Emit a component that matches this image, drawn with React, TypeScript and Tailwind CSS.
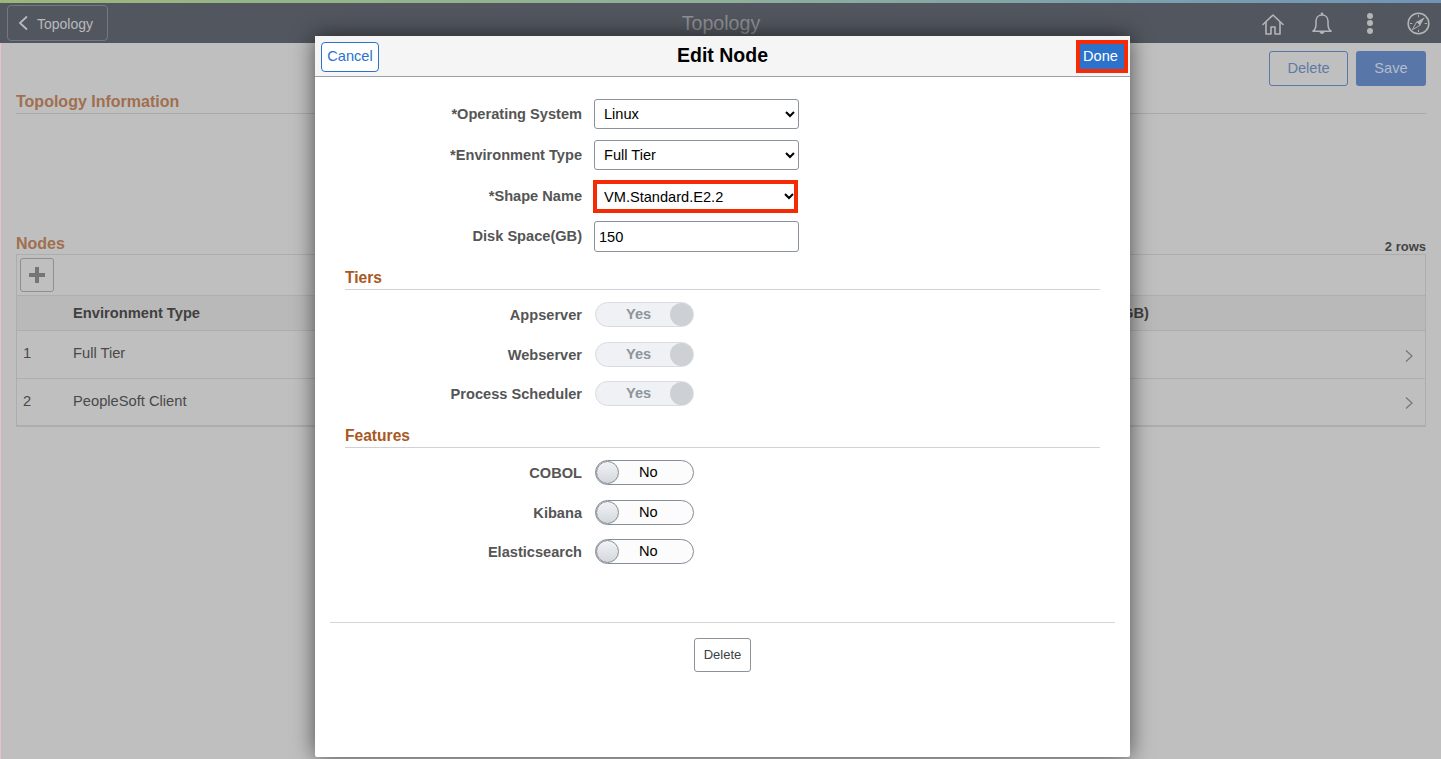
const FONT = "[font-family:'Liberation_Sans',Arial,sans-serif]"

const LABEL = 'text-right text-[14.6px] font-bold text-[#555555] leading-none'
const CONTROL = 'bg-white text-[14.6px] text-black'

function HomeIcon() {
  return (
    <svg width="22" height="21" viewBox="0 0 22 21" fill="none" stroke="#b4b5b7" strokeWidth="1.600" strokeLinejoin="round" strokeLinecap="round">
      <path d="M1 10.500 11 1l10 9.500" />
      <path d="M4 8.500V20h5v-7h4v7h5V8.500" />
    </svg>
  )
}

function BellIcon() {
  return (
    <svg width="20" height="23" viewBox="0 0 20 23" fill="none" stroke="#b4b5b7" strokeWidth="1.500" strokeLinejoin="round">
      <path d="M1 19.200c2.200-1.700 3-4 3-7V9C4 5.500 6.500 3 10 3s6 2.500 6 6v3.200c0 3 .8 5.300 3 7z" />
      <circle cx="10" cy="1.800" r="1.300" fill="#b4b5b7" stroke="none" />
      <path d="M7.500 19.500c0 3.200 5 3.200 5 0z" fill="#b4b5b7" stroke="none" />
    </svg>
  )
}

function DotsIcon() {
  return (
    <div className="flex flex-col gap-[1.500px]">
      <span className="w-[6px] h-[6px] rounded-full bg-[#b4b5b7]" />
      <span className="w-[6px] h-[6px] rounded-full bg-[#b4b5b7]" />
      <span className="w-[6px] h-[6px] rounded-full bg-[#b4b5b7]" />
    </div>
  )
}

function CompassIcon() {
  return (
    <svg width="23" height="23" viewBox="0 0 24 24" fill="none" stroke="#b4b5b7" strokeWidth="1.600">
      <circle cx="12" cy="12" r="10.800" />
      <path d="M18.500 5.500 13.800 13.800 10.200 10.200z" fill="#b4b5b7" stroke="none" />
      <path d="M5.500 18.500l4.700-8.300 3.600 3.600z" strokeWidth="1" />
      <path d="M12 3v2.500M12 18.500V21M3 12h2.500M18.500 12H21" strokeWidth="1" />
    </svg>
  )
}

function Chevron() {
  return (
    <svg width="10" height="14" viewBox="0 0 10 14" fill="none" stroke="#767676" strokeWidth="1.200">
      <path d="M2 1.500 8 7l-6 5.500" />
    </svg>
  )
}

function SelectRow({ label, value }: { label: string; value: string }) {
  return (
    <div className="grid grid-cols-[267px_205px] gap-x-3 items-center h-[30px]">
      <div className={LABEL}>{label}</div>
      <select defaultValue={value} className={`${CONTROL} w-[205px] h-[30px] pl-[5px] border border-[#8c9299] rounded-[3px] outline-none`}>
        <option>{value}</option>
      </select>
    </div>
  )
}

function Toggle({ label, on }: { label: string; on: boolean }) {
  return (
    <div className="grid grid-cols-[267px_100px] gap-x-3 items-center h-[25px]">
      <div className={LABEL}>{label}</div>
      {on ? (
        <div className="relative ml-px -translate-y-px h-[25px] w-[99px] rounded-full bg-[#eff1f4] border border-[#d8dce0]">
          <span className="absolute left-[30px] top-[3px] text-[14.600px] font-bold text-[#8d949c] leading-[16px]">Yes</span>
          <span className="absolute right-0 top-0 w-[23px] h-[23px] rounded-full bg-[#cdd1d6]" />
        </div>
      ) : (
        <div className="relative ml-px -translate-y-px h-[25px] w-[99px] rounded-full bg-[#fcfcfc] border border-[#858d96]">
          <span className="absolute left-[43px] top-[3px] text-[14.600px] text-black leading-[16px]">No</span>
          <span className="absolute left-0 top-0 w-[23px] h-[23px] rounded-full bg-gradient-to-b from-[#f2f3f5] to-[#d3d7dc] border border-[#858d96]" />
        </div>
      )}
    </div>
  )
}

function SectionTitle({ children, className }: { children: string; className?: string }) {
  return (
    <div className={`mx-[30px] border-b border-[#d0d3d6] h-[21px] text-[15.600px] font-bold text-[#a9581f] leading-[17px] ${className ?? ''}`}>
      {children}
    </div>
  )
}

function NodeRow({ n, name, last }: { n: number; name: string; last?: boolean }) {
  return (
    <div className={`flex items-center h-[48px] text-[14.700px] text-[#494949] ${last ? 'pb-[1px] border-b-2 border-b-[#adadb0]' : 'pb-[3px] border-b border-[#aeaeb1]'}`}>
      <span className="w-[56px] pl-[6px]">{n}</span>
      <span className="flex-1">{name}</span>
      <span className={`mr-[11px] ${last ? 'mt-[3px]' : 'mt-[5px]'}`}>
        <Chevron />
      </span>
    </div>
  )
}

export default function App() {
  return (
    <div className={`relative h-[759px] w-[1441px] overflow-hidden bg-[#bfbfbf] ${FONT}`}>
      <div className="h-[3px] bg-gradient-to-r from-[#9ab87a] via-[#8fb09a] to-[#6f94b8]" />

      <header className="relative flex items-center justify-between h-[40px] bg-[#52565e] pl-[7px]">
        <div className="flex items-center w-[101px] h-[36px] border border-[#75797f] rounded-[4px] pl-[10px] gap-[8px] text-[14px] text-[#b9babc]">
          <svg width="11" height="16" viewBox="0 0 11 16" fill="none" stroke="#b9babc" strokeWidth="1.800">
            <path d="M9 1.500 2 8l7 6.500" />
          </svg>
          <span className="pt-[2px]">Topology</span>
        </div>
        <div className="absolute left-0 w-[1442px] pt-[2px] text-center text-[19.600px] text-[#8e9094]">Topology</div>
        <div className="flex items-center">
          <div className="mr-[28px] pt-[2px]"><HomeIcon /></div>
          <div className="mr-[35px]"><BellIcon /></div>
          <div className="mr-[34px]"><DotsIcon /></div>
          <div className="mr-[11px]"><CompassIcon /></div>
        </div>
      </header>

      <main className="border-l border-[#e8bfd0] h-[716px] pl-[15px] pr-[15px]">
        <div className="flex justify-end gap-2 pt-[8px]">
          <button className="w-[79px] h-[35px] border border-[#5a77a6] rounded-[3px] text-[14.600px] text-[#5e7aa8]">Delete</button>
          <button className="w-[70px] h-[35px] rounded-[3px] bg-[#5876a7] text-[14.600px] text-[#b3bdcc]">Save</button>
        </div>

        <div className="mt-[6px] h-[22px] border-b border-[#a9a9a9] text-[16px] font-bold text-[#9f6f4f] leading-[20px]">
          Topology Information
        </div>

        <div className="mt-[119px] flex justify-between items-end h-[21px]">
          <span className="text-[16px] font-bold text-[#9f6f4f] leading-[17px] mb-[2px]">Nodes</span>
          <span className="text-[13px] font-bold text-[#444444] -mb-[2px]">2 rows</span>
        </div>

        <div className="border-x border-[#adadb0] border-t border-t-[#adadb0]">
          <div className="h-[41px] flex items-center pl-[3px] border-b border-[#aeaeb1]">
            <div className="flex items-center justify-center w-[34px] h-[34px] border border-[#8f8f8f] rounded-[3px]">
              <svg width="16" height="16" viewBox="0 0 16 16" fill="#757575">
                <path d="M6 0h4v6h6v4h-6v6H6v-6H0V6h6z" />
              </svg>
            </div>
          </div>
          <div className="flex items-center h-[35px] border-b border-[#aeaeb1] bg-[#b9b9b9] text-[14.700px] font-bold text-[#404040]">
            <span className="ml-[56px] flex-1">Environment Type</span>
            <span className="mr-[276px]">Disk Space(GB)</span>
          </div>
          <NodeRow n={1} name="Full Tier" />
          <NodeRow n={2} name="PeopleSoft Client" last />
        </div>
      </main>

      {/* Edit Node modal, sits over the dimmed page */}
      <div className="absolute left-[315px] top-[36px] w-[815px] h-[721px] bg-white shadow-[0_0_22px_rgba(0,0,0,0.6)] rounded-b-[2px]">
        <div className="relative flex items-center justify-between h-[41px] px-[6px] bg-[#f5f5f5] border-b border-[#9aa1a8]">
          <button className="mt-[2px] w-[58px] h-[30px] bg-white border border-[#2a72cc] rounded-[4px] text-[14.600px] text-[#2a72cc]">Cancel</button>
          <div className="absolute left-0 right-0 text-center text-[19.500px] font-bold text-black pointer-events-none">Edit Node</div>
          <button className="-mr-[4px] mt-[1px] w-[52px] h-[33px] pr-[3px] bg-[#2a72cc] border-[4px] border-[#f52b05] text-[14.600px] text-white">Done</button>
        </div>

        <div className="flex flex-col gap-[11px] pt-[22px]">
          <SelectRow label="*Operating System" value="Linux" />
          <SelectRow label="*Environment Type" value="Full Tier" />
          <div className="grid grid-cols-[267px_205px] gap-x-3 items-center h-[31px]">
            <div className={`${LABEL} -mt-[2px]`}>*Shape Name</div>
            {/* red annotation box drawn over the select, the arrow stays where it is on the others */}
            <select
              defaultValue="VM.Standard.E2.2"
              className={`${CONTROL} -ml-px -mt-px w-[205px] h-[33px] pl-[6px] border border-[#8c9299] outline-4 -outline-offset-4 outline-[#f52b05]`}
            >
              <option>VM.Standard.E2.2</option>
            </select>
          </div>
          <div className="grid grid-cols-[267px_205px] gap-x-3 items-center h-[31px] -mt-[2px]">
            <div className={LABEL}>Disk Space(GB)</div>
            <input defaultValue="150" className={`${CONTROL} w-[205px] h-[31px] pl-[4px] border border-[#8c9299] rounded-[3px] outline-none`} />
          </div>
        </div>

        <SectionTitle className="mt-[17px]">Tiers</SectionTitle>
        <div className="flex flex-col gap-[14.500px] mt-[13px]">
          <Toggle label="Appserver" on />
          <Toggle label="Webserver" on />
          <Toggle label="Process Scheduler" on />
        </div>

        <SectionTitle className="mt-[20px]">Features</SectionTitle>
        <div className="flex flex-col gap-[14.500px] mt-[13px]">
          <Toggle label="COBOL" on={false} />
          <Toggle label="Kibana" on={false} />
          <Toggle label="Elasticsearch" on={false} />
        </div>

        <div className="mt-[57px] mx-[15px] border-t border-[#d0d6da] flex justify-center pt-[15px]">
          <button className="w-[57px] h-[34px] bg-white border border-[#8c9299] rounded-[3px] text-[13px] text-[#3a3f45]">Delete</button>
        </div>
      </div>
    </div>
  )
}
